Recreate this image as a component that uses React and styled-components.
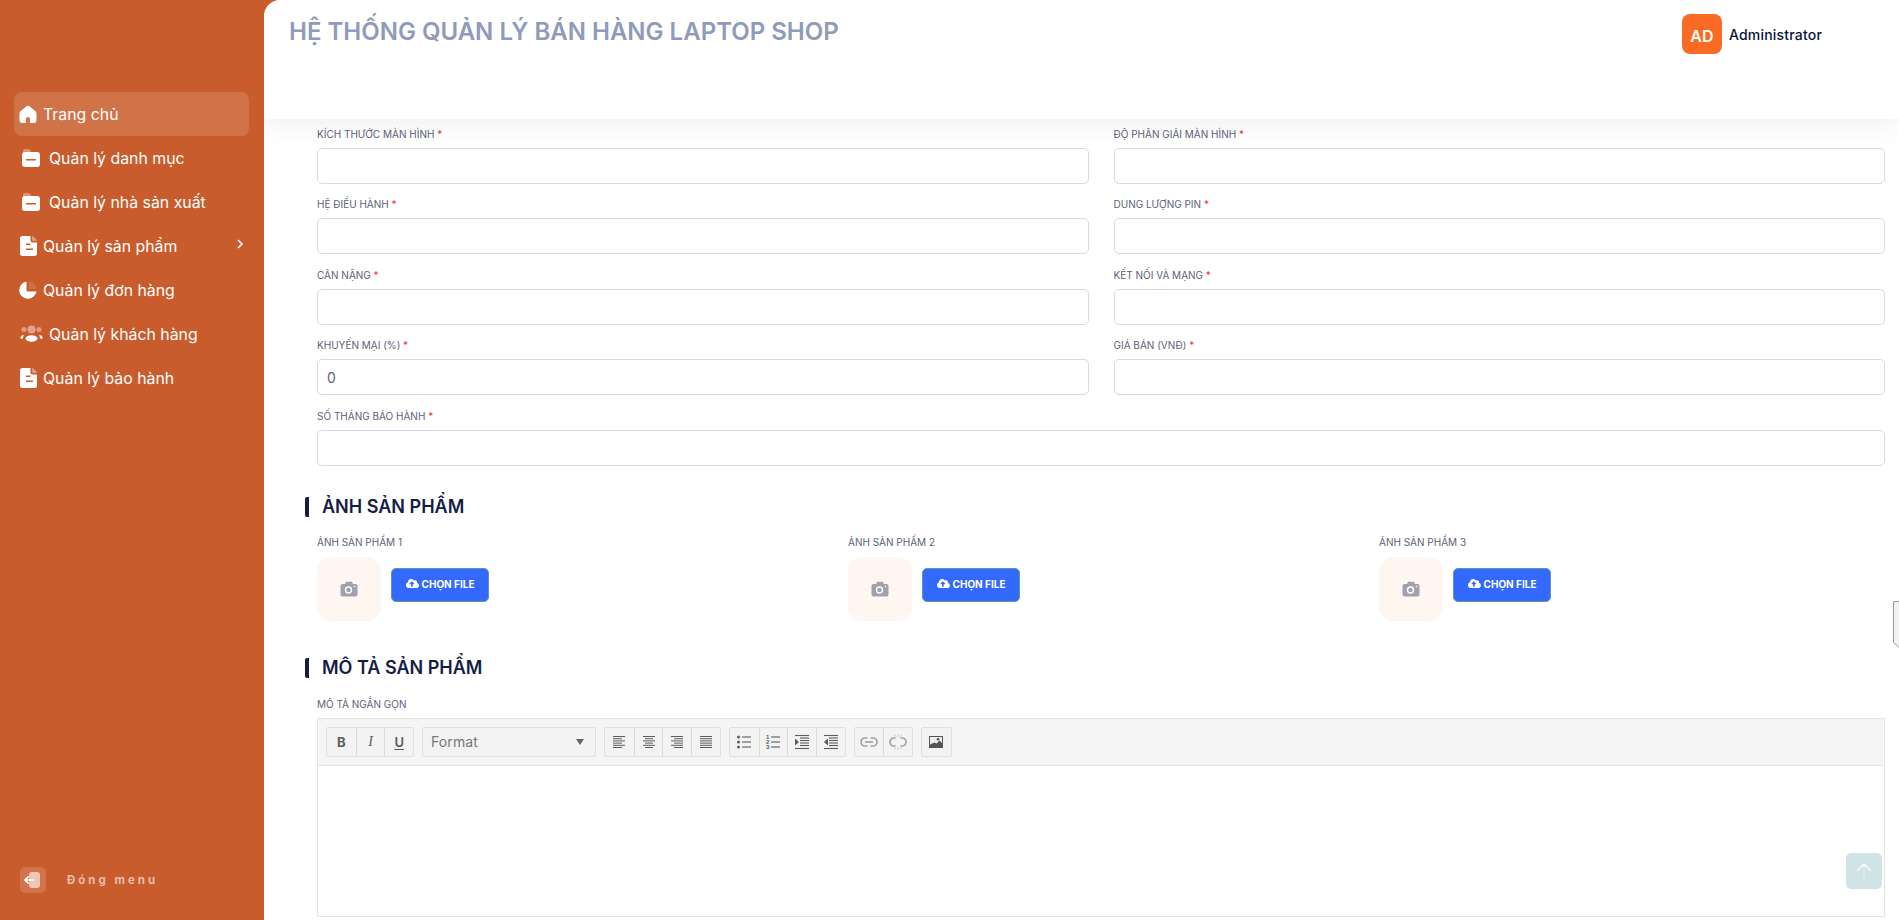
import React from 'react';
import styled, { createGlobalStyle } from 'styled-components';
import { FaCloudUploadAlt } from 'react-icons/fa';

const ORANGE = '#c95c2c';

const Global = createGlobalStyle`
  html, body { margin: 0; padding: 0; height: 100%; overflow: hidden; background: ${ORANGE}; }
  * { box-sizing: border-box; }
  body { font-family: Inter, "Noto Sans", sans-serif; }
`;

const Shell = styled.div`
  display: flex; width: 100%; height: 920px; overflow: hidden; position: relative; background: ${ORANGE};
`;
const Sidebar = styled.aside`
  width: 264px; flex: none; height: 100%; display: flex; flex-direction: column;
  padding: 92px 15px 26px 14px;
`;
const Menu = styled.nav`
  display: flex; flex-direction: column; flex: 1;
`;
const MenuItem = styled.a`
  display: flex; align-items: center; height: 44px; border-radius: 8px; color: #fff;
  font-size: 15.85px; font-weight: 400; padding-left: ${p => p.$pad ?? 5}px; padding-right: 4px;
  gap: ${p => p.$gap ?? 6}px;
  background: ${p => p.$active ? 'rgba(255,255,255,.14)' : 'transparent'};
`;
const MenuIcon = styled.svg`
  flex: none; width: ${p => p.$w || 18}px; height: 22px; fill: #fff;
`;
const MenuLabel = styled.span`flex: 1; white-space: nowrap;`;
const Chevron = styled.svg`
  width: 10px; height: 12px; flex: none; margin-top: -4px; fill: none; stroke: #fff; stroke-width: 1.5;
`;
const Collapse = styled.div`
  display: flex; align-items: center; gap: 21px; padding-left: 6px; margin-top: -1px; padding-bottom: 1px;
  font-size: 11.5px; font-weight: 700; letter-spacing: 3px; color: rgba(255,255,255,.6);
`;
const CollapseIcon = styled.span`
  width: 26px; height: 26px; border-radius: 5px; background: rgba(255,255,255,.15);
  display: flex; align-items: center; justify-content: center;
`;
const Main = styled.main`
  flex: 1; min-width: 0; height: 100%; background: #fff; border-top-left-radius: 16px;
  display: flex; flex-direction: column; overflow: hidden;
`;
const Header = styled.header`
  height: 119px; flex: none; background: #fff; border-top-left-radius: 16px; position: relative; z-index: 2;
  padding: 14px 77px 0 25px; display: flex; justify-content: space-between; align-items: flex-start;
  box-shadow: 0 6px 24px rgba(60, 60, 110, .08);
`;
const Title = styled.h1`
  margin: 3px 0 0; font-size: 24px; line-height: 29px; font-weight: 600; color: #8f9bba;
  white-space: nowrap;
`;
const User = styled.div`display: flex; align-items: center; gap: 7px;`;
const Avatar = styled.div`
  width: 40px; height: 40px; border-radius: 8px; background: #f96a24; color: #fff;
  display: flex; align-items: center; justify-content: center; font-size: 16px; font-weight: 600; padding-top: 3px;
`;
const UserName = styled.span`font-size: 14px; font-weight: 500; color: #071437; letter-spacing: .2px;`;
const Content = styled.div`
  flex: 1; padding: 8px 14px 0 53px; overflow: hidden;
`;
const FormGrid = styled.div`
  display: grid; grid-template-columns: 1fr 1fr; column-gap: 25px; row-gap: 13.4px;
`;
const Field = styled.div`
  grid-column: ${p => p.$full ? '1 / -1' : 'auto'}; min-width: 0;
`;
const Label = styled.label`
  display: block; font-size: 10px; line-height: 14px; color: #5e6278; margin-bottom: ${p => p.$mb ?? 7}px;
  text-transform: uppercase; white-space: nowrap;
`;
const Star = styled.span`color: #ef3340;`;
const Input = styled.input`
  display: block; width: 100%; height: 36px; border: 1px solid #d8d8e6; border-radius: 5px; background: #fff;
  padding: 0 9px; font: 400 14px Inter, sans-serif; color: #5e6278; outline: none;
`;
const SectionTitle = styled.h2`
  margin: ${p => p.$mt}px 0 0 -12px; height: 20px; border-left: 4px solid #141d45; border-radius: 2px;
  padding-left: 13px; font-size: 18px; line-height: 20px; font-weight: 600; color: #141d45;
`;
const UploadGrid = styled.div`
  display: grid; grid-template-columns: repeat(3, 1fr); column-gap: 25px; margin-top: 18px;
`;
const UploadRow = styled.div`display: flex; align-items: center; gap: 10px;`;
const Thumb = styled.div`
  width: 64px; height: 64px; border-radius: 14px; background: #fff5f1;
  display: flex; align-items: center; justify-content: center;
`;
const UploadButton = styled.button`
  width: 98px; height: 34px; border: 1px solid #5a9aa8; border-radius: 5px; background: #3369fd; color: #fff;
  display: flex; align-items: center; justify-content: center; gap: 3px; margin-top: -8px;
  font: 700 10px Inter, sans-serif; padding: 0 0 2px;
`;
const EditorBlock = styled.div`margin-top: 19px;`;
const Editor = styled.div`
  border: 1px solid #e4e4e4; height: 199px; margin-top: -1px;
`;
const Toolbar = styled.div`
  height: 47px; background: #f5f5f5; border-bottom: 1px solid #e4e4e4;
  display: flex; align-items: flex-start; gap: 8px; padding: 8px 0 0 8px;
`;
const ToolGroup = styled.div`
  display: flex; height: 30px; border: 1px solid #e0e0e0; border-radius: 2px; background: #f3f3f3;
`;
const ToolButton = styled.span`
  width: 28.7px; display: flex; align-items: center; justify-content: center; color: #5c5c5c;
  font: ${p => p.$font || '700 13px Inter'}, sans-serif;
  text-decoration: ${p => p.$u ? 'underline' : 'none'};
  text-underline-offset: 2px;
  & + & { border-left: 1px solid #d9d9d9; }
`;
const FormatSelect = styled.div`
  width: 174px; height: 30px; border: 1px solid #e0e0e0; border-radius: 2px; background: #f3f3f3;
  display: flex; align-items: center; justify-content: space-between; padding: 0 11px 0 8px;
  font-size: 14px; color: #777; letter-spacing: .1px;
`;
const Caret = styled.span`
  width: 0; height: 0; border-left: 4px solid transparent; border-right: 4px solid transparent; border-top: 6px solid #666;
`;
const ToTop = styled.div`
  position: absolute; left: 1846px; top: 853px; width: 36px; height: 36px; border-radius: 5px; background: #d0e4e5;
  display: flex; align-items: center; justify-content: center; z-index: 3;
`;
const SideTab = styled.svg`
  position: absolute; left: 1893px; top: 601px; width: 6px; height: 47px; z-index: 3;
`;
const ToolIcon = styled.svg`width: ${p => p.$w || 16}px; height: 16px; display: block;`;

const Lines = ({ rows }) => (
  <ToolIcon viewBox="0 0 16 16" stroke="#5c5c5c" strokeWidth="1">
    {rows.map(([a, b], i) => <line key={i} x1={a} x2={b} y1={2.5 + i * 2.2} y2={2.5 + i * 2.2} />)}
  </ToolIcon>
);
const ListIcon = ({ num }) => (
  <ToolIcon viewBox="0 0 16 16" stroke="#5c5c5c" strokeWidth="1.1">
    {[3, 8, 13].map(y => <line key={y} x1="6" x2="15" y1={y} y2={y} />)}
    {[3, 8, 13].map((y, i) => num
      ? <text key={y} x="1" y={y + 2} fontSize="6" fontFamily="Liberation Sans" stroke="none" fill="#5c5c5c">{i + 1}</text>
      : <circle key={y} cx="2.5" cy={y} r="1.5" fill="#5c5c5c" stroke="none" />)}
  </ToolIcon>
);
const IndentIcon = ({ out }) => (
  <ToolIcon viewBox="0 0 16 16" stroke="#5c5c5c" strokeWidth="1.1">
    <line x1="1" x2="15" y1="1.5" y2="1.5" />
    {[4, 6.5, 9, 11.5].map(y => <line key={y} x1="6" x2="15" y1={y} y2={y} />)}
    <line x1="1" x2="15" y1="14.5" y2="14.5" />
    <path d={out ? 'M5 4.500v7L1 8z' : 'M1 4.500v7L5 8z'} fill="#5c5c5c" stroke="none" />
  </ToolIcon>
);
const LinkIcon = () => (
  <ToolIcon $w={18} viewBox="0 0 18 16" fill="none" stroke="#a3a3a3" strokeWidth="1.7">
    <path d="M7.500 4H5a4 4 0 0 0 0 8h2.500M10.500 4H13a4 4 0 0 1 0 8h-2.500" />
    <path d="M5 8h8" />
  </ToolIcon>
);
const UnlinkIcon = () => (
  <ToolIcon $w={18} viewBox="0 0 18 16" fill="none" stroke="#a3a3a3" strokeWidth="1.7">
    <path d="M6.500 4H5a4 4 0 0 0 0 8h1.500M11.500 4H13a4 4 0 0 1 0 8h-1.500" />
    <path d="M9 .5v2.500M9 13v2.500M5.500 .8l1.200 1.800M12.500 .8l-1.200 1.800M5.500 15.200l1.200-1.800M12.500 15.200l-1.200-1.800" strokeWidth=".9" stroke="#c2c2c2" />
  </ToolIcon>
);
const ImageIcon = () => (
  <ToolIcon viewBox="0 0 16 16">
    <path d="M1 2h14v12H1z" fill="#555" />
    <path d="M2 3h12v6l-2.500-2.500-3 3-2-1L2 10.500z" fill="#eee" />
    <circle cx="10" cy="5.200" r="1.300" fill="#555" />
  </ToolIcon>
);
const Camera = () => (
  <svg width="18" height="16" viewBox="0 0 18 16">
    <path d="M2.500 3H5l1.200-2.200h5.600L13 3h2.500A2 2 0 0 1 17.500 5v8.500a2 2 0 0 1-2 2h-13a2 2 0 0 1-2-2V5a2 2 0 0 1 2-2z" fill="#a1a1ad" />
    <circle cx="8.500" cy="9" r="3" fill="none" stroke="#fff" strokeWidth="1.400" />
    <circle cx="14.500" cy="5.500" r=".8" fill="#fff" />
  </svg>
);

const HomeIc = () => (
  <MenuIcon viewBox="0 0 18 18" $w={18}>
    <path d="M9 .8c.5 0 1 .2 1.400.5l5.800 4.600c.9.700 1.300 1.600 1.300 2.700V15a3 3 0 0 1-2.800 3H11V14a2 2 0 0 0-4 0v4H3.300A3 3 0 0 1 .5 15V8.600c0-1.100.5-2 1.300-2.700L7.600 1.300C8 1 8.500.8 9 .8z" />
  </MenuIcon>
);
const FolderIc = () => (
  <MenuIcon viewBox="0 0 18 20" $w={18}>
    <path d="M1 5V3a2 2 0 0 1 2-2h3c1.500 0 2.500 1 3.500 3z" opacity=".35" />
    <rect x="0" y="4" width="18" height="15" rx="3" />
    <rect x="4" y="11" width="10" height="1.500" fill={ORANGE} />
  </MenuIcon>
);
const DocIc = () => (
  <MenuIcon viewBox="0 0 17 21" $w={17}>
    <path d="M2.500 .5H10.500V5a2 2 0 0 0 2 2H17V18a2.500 2.500 0 0 1-2.500 2.500h-12A2.500 2.500 0 0 1 0 18V3A2.500 2.500 0 0 1 2.500 .5z" />
    <path d="M12 .5c2.500 1 4 2.500 5 5h-3.500a1.500 1.500 0 0 1-1.500-1.500z" opacity=".4" />
    <rect x="6" y="8" width="4.500" height="1.500" fill={ORANGE} />
    <rect x="6" y="13" width="7" height="1.500" fill={ORANGE} />
  </MenuIcon>
);
const PieIc = () => (
  <MenuIcon viewBox="0 0 18 18" $w={18}>
    <path d="M7.500 .5v8.500a1.500 1.500 0 0 0 1.500 1.500h8.500A8.700 8.700 0 1 1 7.500 .5z" />
    <path d="M10 .5a8 8 0 0 1 7.500 7.500H10z" opacity=".12" />
  </MenuIcon>
);
const UsersIc = () => (
  <MenuIcon viewBox="0 0 23 18" $w={23}>
    <circle cx="11.500" cy="4.500" r="4" opacity=".45" />
    <circle cx="4" cy="4.500" r="2.500" opacity=".4" />
    <circle cx="19" cy="4.500" r="2.500" opacity=".4" />
    <ellipse cx="11.500" cy="13.500" rx="6" ry="3.300" />
    <path d="M.5 12.500c0-1.500 1.500-2.500 3.500-2.500-.8 1-1 2-.7 3.300L.8 14zM22.500 12.500c0-1.500-1.500-2.500-3.500-2.500.8 1 1 2 .7 3.300l2.500.7z" />
  </MenuIcon>
);

const fields = [
  ['Kích thước màn hình', 'Độ phân giải màn hình'],
  ['Hệ điều hành', 'Dung lượng pin'],
  ['Cân nặng', 'Kết nối và mạng'],
  ['Khuyến mại (%)', 'Giá bán (VNĐ)'],
];

export default function App() {
  return (
    <Shell>
      <Global />
      <Sidebar>
        <Menu>
          <MenuItem $active><HomeIc /><MenuLabel>Trang chủ</MenuLabel></MenuItem>
          <MenuItem $pad={8} $gap={9}><FolderIc /><MenuLabel>Quản lý danh mục</MenuLabel></MenuItem>
          <MenuItem $pad={8} $gap={9}><FolderIc /><MenuLabel>Quản lý nhà sản xuất</MenuLabel></MenuItem>
          <MenuItem $pad={6}><DocIc /><MenuLabel>Quản lý sản phẩm</MenuLabel>
            <Chevron viewBox="0 0 10 12"><path d="M3 2 7 6 3 10" /></Chevron>
          </MenuItem>
          <MenuItem><PieIc /><MenuLabel>Quản lý đơn hàng</MenuLabel></MenuItem>
          <MenuItem $pad={6}><UsersIc /><MenuLabel>Quản lý khách hàng</MenuLabel></MenuItem>
          <MenuItem $pad={6}><DocIc /><MenuLabel>Quản lý bảo hành</MenuLabel></MenuItem>
        </Menu>
        <Collapse>
          <CollapseIcon>
            <svg width="18" height="18" viewBox="0 0 18 18">
              <rect x="5" y="1" width="11" height="16" rx="3" fill="#fff" opacity=".6" />
              <path d="M1 9h9M4.500 5.500 1 9l3.500 3.500" fill="none" stroke="#fff" strokeWidth="1.700" />
            </svg>
          </CollapseIcon>
          Đóng menu
        </Collapse>
      </Sidebar>
      <Main>
        <Header>
          <Title>HỆ THỐNG QUẢN LÝ BÁN HÀNG LAPTOP SHOP</Title>
          <User>
            <Avatar>AD</Avatar>
            <UserName>Administrator</UserName>
          </User>
        </Header>
        <Content>
          <FormGrid>
            {fields.flat().map(name => (
              <Field key={name}>
                <Label>{name} <Star>*</Star></Label>
                <Input defaultValue={name.startsWith('Khuyến') ? '0' : ''} />
              </Field>
            ))}
            <Field $full>
              <Label>Số tháng bảo hành <Star>*</Star></Label>
              <Input />
            </Field>
          </FormGrid>
          <SectionTitle $mt={31}>ẢNH SẢN PHẨM</SectionTitle>
          <UploadGrid>
            {[1, 2, 3].map(n => (
              <div key={n}>
                <Label $mb={8}>Ảnh sản phẩm {n}</Label>
                <UploadRow>
                  <Thumb><Camera /></Thumb>
                  <UploadButton><FaCloudUploadAlt size={13} />CHỌN FILE</UploadButton>
                </UploadRow>
              </div>
            ))}
          </UploadGrid>
          <SectionTitle $mt={37}>MÔ TẢ SẢN PHẨM</SectionTitle>
          <EditorBlock>
            <Label $mb={8}>Mô tả ngắn gọn</Label>
            <Editor>
              <Toolbar>
                <ToolGroup>
                  <ToolButton>B</ToolButton>
                  <ToolButton $font='italic 400 14px "Liberation Serif"'>I</ToolButton>
                  <ToolButton $u $font="600 13px Inter">U</ToolButton>
                </ToolGroup>
                <FormatSelect>Format<Caret /></FormatSelect>
                <ToolGroup>
                  <ToolButton><Lines rows={[[2, 14], [2, 11], [2, 14], [2, 11], [2, 14], [2, 11]]} /></ToolButton>
                  <ToolButton><Lines rows={[[2, 14], [4, 12], [2, 14], [4, 12], [2, 14], [4, 12]]} /></ToolButton>
                  <ToolButton><Lines rows={[[2, 14], [5, 14], [2, 14], [5, 14], [2, 14], [5, 14]]} /></ToolButton>
                  <ToolButton><Lines rows={[[2, 14], [2, 14], [2, 14], [2, 14], [2, 14], [2, 14]]} /></ToolButton>
                </ToolGroup>
                <ToolGroup>
                  <ToolButton><ListIcon /></ToolButton>
                  <ToolButton><ListIcon num /></ToolButton>
                  <ToolButton><IndentIcon /></ToolButton>
                  <ToolButton><IndentIcon out /></ToolButton>
                </ToolGroup>
                <ToolGroup>
                  <ToolButton><LinkIcon /></ToolButton>
                  <ToolButton><UnlinkIcon /></ToolButton>
                </ToolGroup>
                <ToolGroup>
                  <ToolButton><ImageIcon /></ToolButton>
                </ToolGroup>
              </Toolbar>
            </Editor>
          </EditorBlock>
        </Content>
      </Main>
      <ToTop>
        <svg width="16" height="16" viewBox="0 0 16 16" fill="none" stroke="#fff" strokeWidth="1.500">
          <path d="M1 8 8 1l7 7" opacity=".85" />
          <path d="M8 1v14" opacity=".35" />
        </svg>
      </ToTop>
      <SideTab viewBox="0 0 6 47">
        <path d="M6 .5H.5v41L6 46.500" fill="#f2f2f2" stroke="#9a9a9a" />
      </SideTab>
    </Shell>
  );
}
